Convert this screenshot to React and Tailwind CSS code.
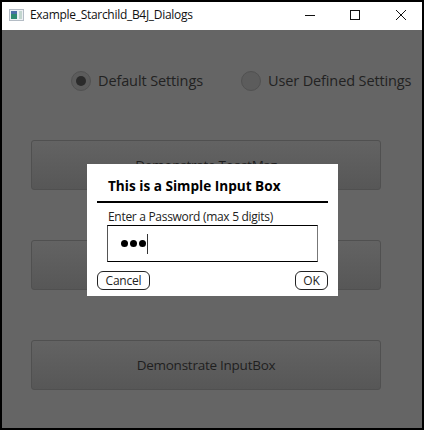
import React from "react";

const font = { fontFamily: '"Open Sans", "Noto Sans", sans-serif' };

function Radio({ label, checked, className }) {
  return (
    <div className={`flex items-center gap-[7px] ${className}`}>
      <div className="flex h-5 w-5 items-center justify-center rounded-full border border-[#515151] bg-[#5c5c5c]">
        {checked && <div className="h-[10px] w-[10px] rounded-full bg-[#2b2b2b]" />}
      </div>
      <span className="text-[14.5px] leading-5 tracking-[-0.12px] text-[#222]">{label}</span>
    </div>
  );
}

function BackButton({ label, className }) {
  return (
    <button className={`flex h-[50px] w-[350px] items-center justify-center rounded-[3px] border border-[#505050] bg-gradient-to-b from-[#636363] to-[#575757] text-[13.5px] tracking-[-0.25px] text-[#1f1f1f] ${className}`}>
      {label}
    </button>
  );
}

export default function App() {
  return (
    <div className="relative h-[430px] w-[424px] overflow-hidden border-2 border-black bg-[#656565]" style={font}>
      {/* Title bar */}
      <div className="flex h-[28px] items-center bg-white pb-[3px]">
        <svg width="15" height="12" viewBox="0 0 15 12" className="ml-[7px]">
          <rect x="0.5" y="0.5" width="14" height="11" fill="#eef1f4" stroke="#b4bcc5" />
          <rect x="2" y="2" width="6" height="8" fill="#2f8a70" />
          <rect x="2" y="2" width="6" height="3" fill="#4c6fa8" />
          <rect x="10" y="2" width="3" height="8" fill="#c3d6cf" />
        </svg>
        <span className="ml-[6px] text-[12px] tracking-[-0.3px] text-[#111]">Example_Starchild_B4J_Dialogs</span>
        <div className="ml-auto flex items-center">
          <svg width="12" height="12" viewBox="0 0 12 12" className="mr-[33px]">
            <path d="M1 6.5H11" stroke="#111" />
          </svg>
          <svg width="12" height="12" viewBox="0 0 12 12" className="mr-[34px]">
            <rect x="1.5" y="1.5" width="9" height="9" fill="none" stroke="#111" />
          </svg>
          <svg width="12" height="12" viewBox="0 0 12 12" className="mr-[15px]">
            <path d="M1 1L11 11M11 1L1 11" stroke="#111" />
          </svg>
        </div>
      </div>

      {/* Main form behind the dialog */}
      <div className="flex flex-col pl-[29px]">
        <div className="mt-[41px] flex">
          <Radio label="Default Settings" checked className="ml-[40px]" />
          <Radio label="User Defined Settings" className="ml-[38px] whitespace-nowrap" />
        </div>
        <BackButton label="Demonstrate ToastMsg" className="mt-[49px]" />
        <BackButton label="Demonstrate MsgBox" className="mt-[50px]" />
        <BackButton label="Demonstrate InputBox" className="mt-[50px]" />
      </div>

      {/* Input dialog */}
      <div className="absolute left-[85px] top-[162px] flex h-[132px] w-[251px] flex-col bg-white px-[10px] text-black">
        <div className="pl-[11px] pt-[12px] text-[13.6px] font-bold leading-[19px]">This is a Simple Input Box</div>
        <div className="mt-[6px] h-[2px] bg-black" />
        <div className="pl-[11px] pt-[6px] text-[12px] leading-[16px] tracking-[-0.3px] text-[#222]">Enter a Password (max 5 digits)</div>
        <div className="ml-[10px] flex h-[37px] w-[211px] items-center border border-black border-r-[#777] border-l-[#555] pl-[13px]">
          <span className="flex gap-[2px]">
            <span className="h-[7px] w-[7px] rounded-full bg-black" />
            <span className="h-[7px] w-[7px] rounded-full bg-black" />
            <span className="h-[7px] w-[7px] rounded-full bg-black" />
          </span>
          <span className="ml-px h-[20px] w-px bg-[#333]" />
        </div>
        <div className="mt-[9px] flex justify-between">
          <button className="flex h-[19px] w-[53px] items-center justify-center rounded-[6px] border border-[#222] text-[12px] tracking-[-0.2px] text-[#222]">Cancel</button>
          <button className="flex h-[19px] w-[33px] items-center justify-center rounded-[6px] border border-[#222] text-[12px] text-[#222]">OK</button>
        </div>
      </div>
    </div>
  );
}
